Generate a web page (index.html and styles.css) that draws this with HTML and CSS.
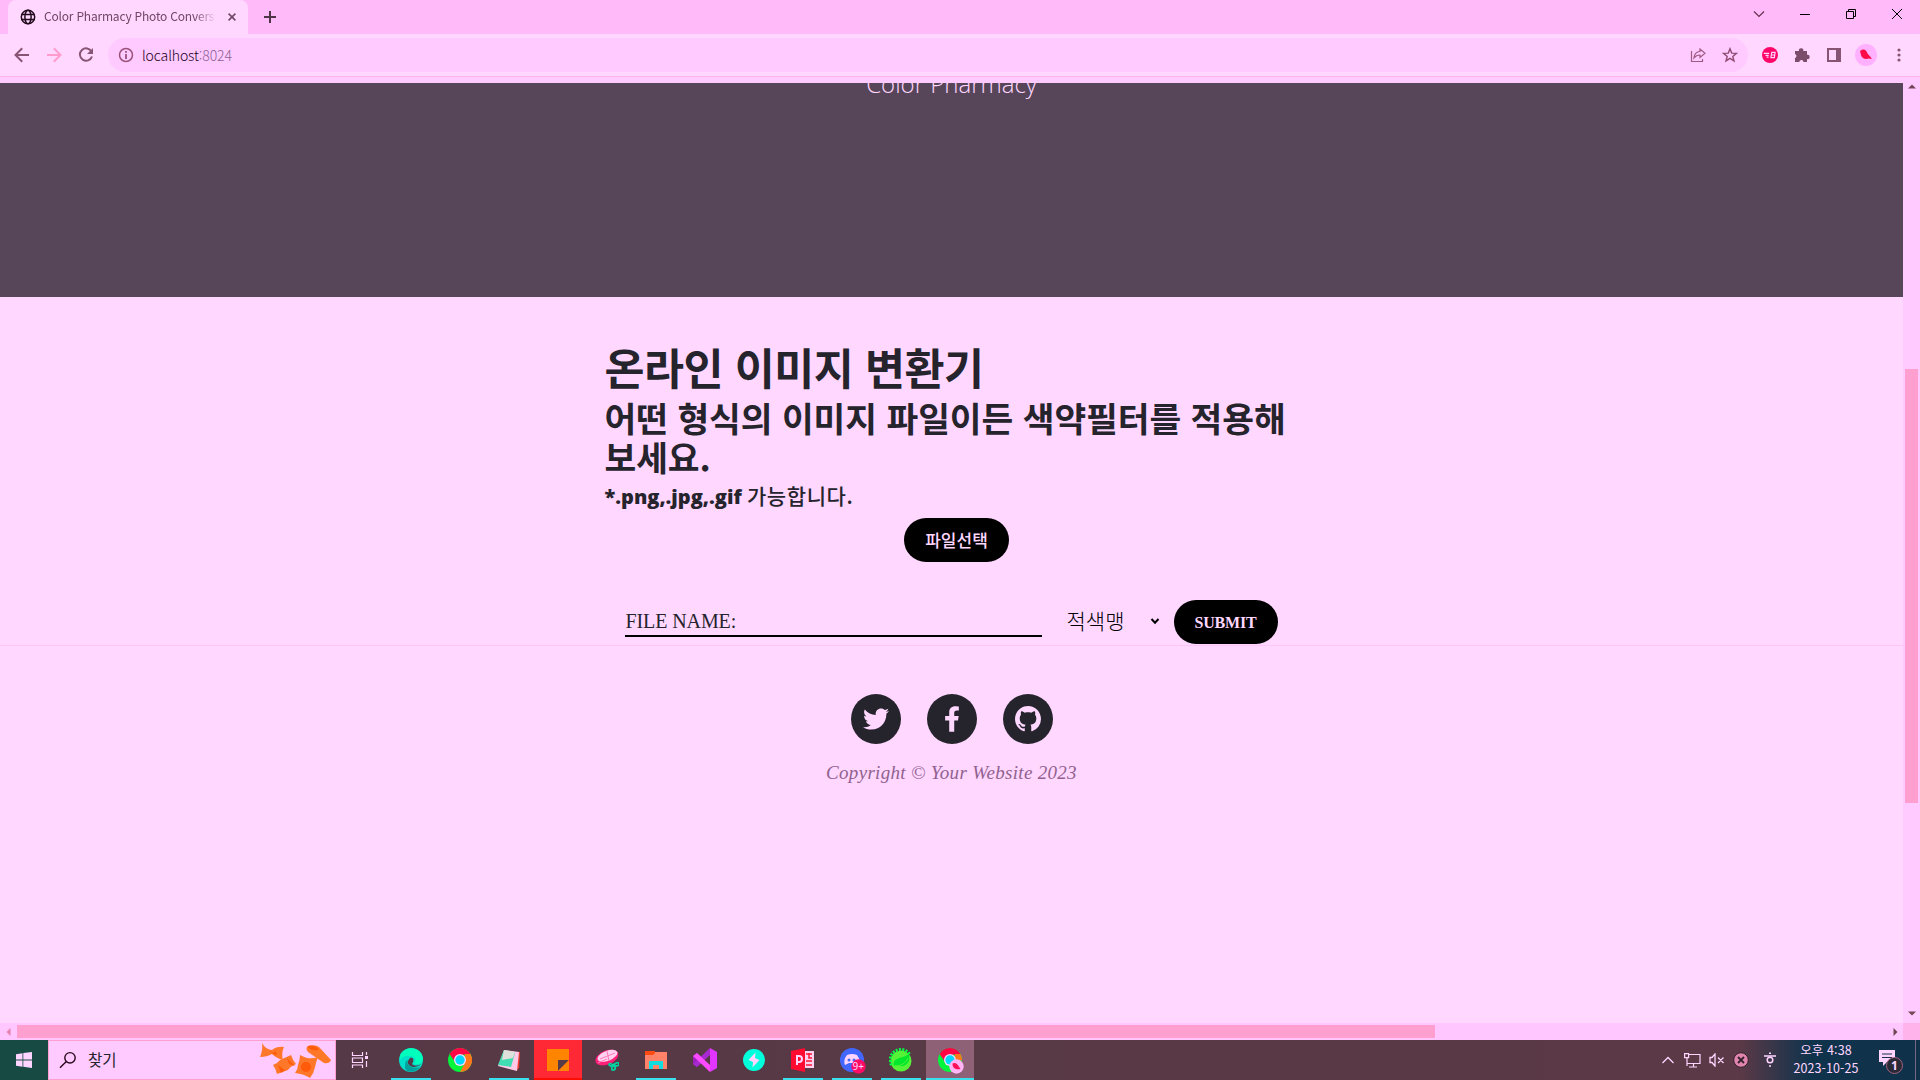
FILE: index.html
```html
<!DOCTYPE html>
<html lang="ko">
<head>
<meta charset="utf-8">
<title>Color Pharmacy Photo Conversion</title>
<link rel="stylesheet" href="styles.css">
</head>
<body>
<header class="tabstrip">
  <div class="tab">
    <svg class="globe" width="16" height="16" viewBox="0 0 16 16" fill="none" stroke="#210a1c" stroke-width="1.5"><circle cx="8" cy="8" r="6.7"/><ellipse cx="8" cy="8" rx="3.1" ry="6.7"/><path d="M1.6 5.5h12.8M1.6 10.5h12.8"/></svg>
    <span class="tab-title">Color Pharmacy Photo Convers</span>
    <svg width="8" height="8" viewBox="0 0 8 8" stroke="#704764" stroke-width="1.6"><path d="M.6.6l6.8 6.8M7.4.6L.6 7.4"/></svg>
  </div>
  <svg class="plus" width="12" height="12" viewBox="0 0 12 12" stroke="#4f3346" stroke-width="2"><path d="M6 0v12M0 6h12"/></svg>
  <div class="window-controls">
    <svg width="12" height="12" viewBox="0 0 12 12" fill="none" stroke="#66304f" stroke-width="1.2"><path d="M1 3.5l5 5 5-5"/></svg>
    <svg width="12" height="12" viewBox="0 0 12 12" stroke="#000"><path d="M1 6.5h10"/></svg>
    <svg width="12" height="12" viewBox="0 0 12 12" fill="none" stroke="#000"><path d="M1.500 3.500h7v7h-7zM3.500 3V1.500h7v7H9"/></svg>
    <svg width="12" height="12" viewBox="0 0 12 12" stroke="#000"><path d="M1 1l10 10M11 1L1 11"/></svg>
  </div>
</header>
<nav class="toolbar">
  <svg width="16" height="16" viewBox="0 0 16 16" fill="none" stroke="#885474" stroke-width="2"><path d="M15 8H2M8.2 1.3L1.5 8l6.700 6.700"/></svg>
  <svg width="16" height="16" viewBox="0 0 16 16" fill="none" stroke="#ff9ccc" stroke-width="2"><path d="M1 8h13M7.800 1.300L14.500 8l-6.700 6.700"/></svg>
  <svg width="16" height="16" viewBox="0 0 16 16" fill="none" stroke="#885474" stroke-width="2"><path d="M13.600 4.600A6.200 6.200 0 1 0 14 9.500"/><path d="M15 1v6H9z" fill="#885474" stroke="none"/></svg>
  <div class="omnibox">
    <svg width="16" height="16" viewBox="0 0 16 16" fill="none" stroke="#9b527a" stroke-width="1.500"><circle cx="8" cy="8" r="6.500"/><path d="M8 7v5M8 4v1.700" stroke-width="1.800"/></svg>
    <span class="url">localhost<span class="port">:8024</span></span>
    <svg class="share" width="16" height="16" viewBox="0 0 16 16" fill="none" stroke="#a05a82" stroke-width="1.200"><path d="M1.500 4v10.500h11V12M4 11c.3-4 2.500-6.300 6-6.500V2l5 4.300-5 4.200V8C7 8 5.500 9 4 11z"/></svg>
    <svg width="16" height="16" viewBox="0 0 16 16" fill="none" stroke="#8d4b70" stroke-width="1.400"><path d="M8 1.800l1.700 4.300 4.700.3-3.600 3 1.200 4.500L8 11.400l-4 2.500 1.200-4.500-3.600-3 4.700-.3z"/></svg>
  </div>
  <svg class="ext" width="16" height="16" viewBox="0 0 16 16"><circle cx="8" cy="8" r="8" fill="#ff0568"/><path d="M1.800 6.300h5.400M3.500 8.300h3.200M4.600 10.200h2M9.800 5.300h3.300l-.4 2.600-.4 2.800H8.900zM9.400 8h3.200" fill="none" stroke="#ffd5ff" stroke-width="1.200"/></svg>
  <svg width="16" height="16" viewBox="0 0 16 16" fill="#7c4c6b"><path d="M1 4h4a2.200 2.200 0 1 1 4.300 0H13v3.800a2.200 2.200 0 1 1 0 4.300V15H9.500a2.100 2.100 0 0 0-4.200 0H1v-4a2.100 2.100 0 0 0 0-4z"/></svg>
  <svg width="16" height="16" viewBox="0 0 16 16"><path d="M2 2h12v12H2z" fill="none" stroke="#885474" stroke-width="2"/><path d="M10 1h5v14h-5z" fill="#885474"/></svg>
  <svg class="avatar" width="22" height="22" viewBox="0 0 22 22"><circle cx="11" cy="11" r="11" fill="#ffb0ff"/><path d="M5 7l2.500-1.500C10 5 12 7 12.500 9.500l3.500 4 .8 1.500-3-.5c-3 1-7 .3-7.800-3.500z" fill="#ff0a46"/></svg>
  <svg class="menu" width="4" height="14" viewBox="0 0 4 14" fill="#885474"><circle cx="2" cy="2" r="1.600"/><circle cx="2" cy="7" r="1.600"/><circle cx="2" cy="12" r="1.600"/></svg>
</nav>
<div class="divider"></div>
<div class="viewport">
  <main class="page">
    <section class="hero"><p class="hero-title">Color Pharmacy</p></section>
    <section class="converter">
      <h1>온라인 이미지 변환기</h1>
      <h2>어떤 형식의 이미지 파일이든 색약필터를 적용해보세요.</h2>
      <p class="formats">*.png,.jpg,.gif <span class="formats-note">가능합니다.</span></p>
      <div class="choose"><button class="pill">파일선택</button></div>
      <div class="form-row">
        <div class="filename">FILE NAME:</div>
        <div class="select">적색맹<svg width="10" height="7" viewBox="0 0 10 7" fill="none" stroke="#000" stroke-width="2"><path d="M1.500 1L5 4.700 8.500 1"/></svg></div>
        <button class="pill submit">SUBMIT</button>
      </div>
    </section>
    <footer class="footer">
      <div class="social">
        <a class="circle"><svg width="26" height="26" viewBox="0 0 512 512"><path d="M459.370 151.716c.325 4.548.325 9.097.325 13.645 0 138.720-105.583 298.558-298.558 298.558-59.452 0-114.680-17.219-161.137-47.106 8.447.974 16.568 1.299 25.340 1.299 49.055 0 94.213-16.568 130.274-44.832-46.132-.975-84.792-31.188-98.112-72.772 6.498.974 12.995 1.624 19.818 1.624 9.421 0 18.843-1.300 27.614-3.573-48.081-9.747-84.143-51.980-84.143-102.985v-1.299c13.969 7.797 30.214 12.670 47.431 13.319-28.264-18.843-46.781-51.005-46.781-87.391 0-19.492 5.197-37.360 14.294-52.954 51.655 63.675 129.300 105.258 216.365 109.807-1.624-7.797-2.599-15.918-2.599-24.040 0-57.828 46.782-104.934 104.934-104.934 30.213 0 57.502 12.670 76.670 33.137 23.715-4.548 46.456-13.320 66.599-25.340-7.798 24.366-24.366 44.833-46.132 57.827 21.117-2.273 41.584-8.122 60.426-16.243-14.292 20.791-32.161 39.308-52.628 54.253z"/></svg></a>
        <a class="circle"><svg width="16" height="26" viewBox="0 0 320 512"><path d="M279.140 288l14.220-92.660h-88.910v-60.130c0-25.350 12.420-50.060 52.240-50.060h40.420V6.260S260.430 0 225.360 0c-73.220 0-121.080 44.380-121.080 124.720v70.620H22.890V288h81.390v224h100.170V288z"/></svg></a>
        <a class="circle"><svg width="26" height="26" viewBox="0 0 16 16"><path d="M8 0C3.580 0 0 3.580 0 8c0 3.540 2.290 6.530 5.470 7.590.4.070.55-.17.55-.38 0-.19-.01-.82-.01-1.490-2.010.37-2.530-.49-2.690-.94-.09-.23-.48-.94-.82-1.130-.28-.15-.68-.52-.01-.53.63-.01 1.080.58 1.230.82.720 1.210 1.870.87 2.330.66.070-.52.280-.87.510-1.070-1.780-.2-3.640-.89-3.640-3.950 0-.87.310-1.590.82-2.150-.08-.2-.36-1.020.08-2.120 0 0 .67-.21 2.200.82.640-.18 1.320-.27 2-.27s1.360.09 2 .27c1.530-1.040 2.200-.82 2.200-.82.440 1.100.160 1.920.08 2.120.51.560.82 1.270.82 2.150 0 3.070-1.870 3.750-3.650 3.950.29.25.54.73.54 1.480 0 1.070-.01 1.930-.01 2.200 0 .21.150.46.550.38A8.010 8.010 0 0 0 16 8c0-4.420-3.580-8-8-8z"/></svg></a>
      </div>
      <p class="copyright">Copyright © Your Website 2023</p>
    </footer>
  </main>
  <div class="vscroll">
    <svg width="8" height="5" viewBox="0 0 8 5" fill="#714654"><path d="M0 4.500L4 .500l4 4z"/></svg>
    <div class="vthumb"></div>
    <svg class="down" width="8" height="5" viewBox="0 0 8 5" fill="#714654"><path d="M0 .500h8l-4 4z"/></svg>
  </div>
</div>
<div class="hscroll">
  <svg width="5" height="8" viewBox="0 0 5 8" fill="#e781b0"><path d="M4.500 0v8l-4-4z"/></svg>
  <div class="hthumb"></div>
  <svg class="right" width="5" height="8" viewBox="0 0 5 8" fill="#714654"><path d="M.500 0v8l4-4z"/></svg>
  <div class="corner"></div>
</div>
<footer class="taskbar">
  <div class="start"><svg width="16" height="16" viewBox="0 0 16 16" fill="#ffd5ff"><path d="M0 2.200L6.500 1.300v6.200H0zM7.300 1.100L16 0v7.500H7.300zM0 8.400h6.500v6.300L0 13.800zM7.300 8.400H16V16l-8.700-1.200z"/></svg></div>
  <div class="search">
    <svg width="18" height="18" viewBox="0 0 18 18" fill="none" stroke="#250819" stroke-width="1.400"><circle cx="11" cy="6.800" r="5.200"/><path d="M7.300 10.500L1 16.800"/></svg>
    <span>찾기</span>
    <svg class="pasta" width="72" height="38" viewBox="0 0 72 38"><g fill="#ff782a"><path d="M2 2q4 7 10 7 5-4 12-3-3 6-1 13-7-2-11-6-5 3-12 3 3-7 2-14z"/><path d="M13 24q4-1 7-5l11-5q2 6 5 9-5 2-8 6l-11 4q-1-5-4-9z"/><path d="M40 14q4 2 7 3 5 1 11-1-2 5-3 10-1 6-5 11-6-4-15-5 3-4 3-8 2-5 2-10z"/><path d="M48 5q7-2 11 1l12 13q-2 4-7 3L48 11q-3-4 0-6z"/></g><g fill="#ff5b0b"><path d="M9 9l4 3 3-2 1 4-4-1zM27 17l8 8-6-2zM18 24l7 5-4 3z"/><ellipse cx="53" cy="7" rx="5.500" ry="2" transform="rotate(15 53 7)"/><circle cx="46" cy="26" r="5"/></g></svg>
  </div>
  <div class="apps">
    <div class="app taskview"><svg width="24" height="24" viewBox="0 0 24 24" fill="none" stroke="#ffd5ff" stroke-width="1.200"><path d="M4.500 4v3.500h10V4M4.500 20v-3h10v3M4.500 10h10v4.500h-10zM18.500 4v3M18.500 13v6"/><path d="M17 8h3v3h-3z" fill="#ffd5ff" stroke="none"/></svg></div>
    <div class="app open"><svg width="24" height="24" viewBox="0 0 24 24"><circle cx="12" cy="12" r="12" fill="#00dfc9"/><path d="M1 8C5-3 22-2 24 10c0 5-4 7-9 6 3-4 1-8-4-8-4 0-8 0-10 4z" fill="#00ffbd"/><path d="M9 12c-2 5 3 9 12 7-5 7-16 6-15-1 0-4 1-6 3-6z" fill="#00a09c"/><path d="M11 10c3-1 4 1 3 4l-1 2c2 2 6 2 9 0-1 2-5 3-8 3-5-1-7-5-3-9z" fill="#553946"/></svg></div>
    <div class="app"><svg width="24" height="24" viewBox="0 0 24 24"><circle cx="12" cy="12" r="12" fill="#00f53c"/><path d="M1.600 6A12 12 0 0 1 22.400 6L12 7 7 14z" fill="#ff0546"/><path d="M22.400 6A12 12 0 0 1 12 24l5-9V6z" fill="#ff761b"/><circle cx="12" cy="12" r="6" fill="#ffd5ff"/><circle cx="12" cy="12" r="4.700" fill="#00d9ff"/></svg></div>
    <div class="app open notepad"><svg width="24" height="24" viewBox="0 0 24 24"><path d="M20 4h3l-1 16-3 3z" fill="#f43b31"/><path d="M7 2l15 2-2 19L1 18z" fill="#ffc9e7"/><path d="M7 2l11 3-4 14-13-2z" fill="#40dcb2"/><path d="M7 2l11 2-2 6-11 2z" fill="#dfdfdc"/></svg></div>
    <div class="app alert"><svg width="22" height="22" viewBox="0 0 22 22"><path d="M0 0h22v11H11v11H0z" fill="#ff8500"/><path d="M11 11h11L11 22z" fill="#573b48"/><path d="M22 11v11H11z" fill="#ff8500"/></svg></div>
    <div class="app"><svg width="24" height="24" viewBox="0 0 24 24"><ellipse cx="12" cy="9.500" rx="12" ry="7" fill="#ff1e78" transform="rotate(-22 12 10)"/><ellipse cx="12.500" cy="8" rx="10.500" ry="5" fill="#ffd0ef" transform="rotate(-22 12 8)"/><path d="M5 11L20 5M12 3l2 10M3 15l9-4" stroke="#ff79b7"/><path d="M18 17q-4-3-4 0 2 2 4 0 5-4 6-1 0 3-6 1 4 3 1 5-4 1-1-5" fill="none" stroke="#00d6a5" stroke-width="1.700"/></svg></div>
    <div class="app open"><svg width="24" height="24" viewBox="0 0 24 24"><path d="M1 3h10v1h12v17H1z" fill="#ff8269"/><path d="M1 3h10v2L9 7H1z" fill="#ff4b12"/><path d="M5 13h14v8h-4v-4H9v4H5z" fill="#10dce0"/></svg></div>
    <div class="app"><svg width="24" height="24" viewBox="0 0 24 24"><path d="M0 8l4-3 5 7-5 7-4-3z" fill="#9d20bd"/><path d="M17 0l7 4v16l-7 4z" fill="#e235ff"/><path d="M17 0v7L4 19l-4-3z" fill="#a829d1"/><path d="M0 8l4-3 13 12v7z" fill="#ff4bff"/></svg></div>
    <div class="app"><svg width="24" height="24" viewBox="0 0 24 24"><circle cx="12" cy="12" r="11" fill="#00ffdb"/><path d="M13.500 4.500L6.500 12l4.500 2-.5 5.500 7-7.500-4.500-2z" fill="#ffd5ff"/></svg></div>
    <div class="app open"><svg width="24" height="24" viewBox="0 0 24 24"><path d="M13 3h10v17H13z" fill="#ffd0ef"/><path d="M15 6h6M15 13h6M15 17h6M18 5v5h3" stroke="#ff1636" stroke-width="1.500" fill="none"/><path d="M0 3l14-3v24L0 21z" fill="#ff0b32"/><path d="M6 17V8h2q3 0 3 3t-3 3H6" stroke="#ffd5ff" stroke-width="2" fill="none"/></svg></div>
    <div class="app open"><svg class="badged" width="26" height="26" viewBox="0 0 26 26"><circle cx="12" cy="12" r="12" fill="#4267ff"/><path d="M7 7q5-2 10 0 4 6 2 10l-4-2H9l-4 2Q3 12 7 7z" fill="#ffd5ff"/><circle cx="9" cy="12" r="1.500" fill="#4267ff"/><circle cx="14" cy="12" r="1.500" fill="#4267ff"/><circle cx="18.500" cy="18.500" r="7.200" fill="#ff0b66"/><text x="12.500" y="22" class="badge-text">9+</text></svg></div>
    <div class="app open"><svg width="24" height="24" viewBox="0 0 24 24"><circle cx="12" cy="13" r="10.500" fill="#57f238"/><path d="M2.500 17A10.500 10.500 0 0 1 21 7" fill="none" stroke="#00ff42" stroke-width="3" stroke-dasharray="2 1.300"/><path d="M5 18C3 9 13 11 20 6c2 8-3 13-10 12-3 0-4-1-5 0z" fill="#00e72b"/><path d="M6 18c6 0 11-3 13-8" fill="none" stroke="#57f238"/></svg></div>
    <div class="app active"><svg class="badged" width="26" height="26" viewBox="0 0 26 26"><circle cx="12" cy="12" r="12" fill="#00f53c"/><path d="M1.600 6A12 12 0 0 1 22.400 6L12 7 7 14z" fill="#ff0546"/><path d="M22.400 6A12 12 0 0 1 24 12l-7 3V6z" fill="#ff761b"/><circle cx="12" cy="12" r="6" fill="#ffd5ff"/><circle cx="12" cy="12" r="4.700" fill="#00d9ff"/><circle cx="18.500" cy="18.500" r="7.200" fill="#ffb5f5"/><path d="M14.500 15.500c3-1.500 5 .5 6 2.500l2 3c-4 .8-8 0-8-5.500z" fill="#ff1159"/></svg></div>
  </div>
  <div class="tray">
    <svg width="12" height="8" viewBox="0 0 12 8" fill="none" stroke="#ffd5ff" stroke-width="1.300"><path d="M.500 7L6 1.500 11.500 7"/></svg>
    <svg class="network" width="17" height="15" viewBox="0 0 17 15" fill="none" stroke="#ffd5ff" stroke-width="1.200"><path d="M5 1.500h11v9H3V6M9.500 11v3M5 14h8M.600.600h4v4h-4zM3 5v8"/></svg>
    <svg width="16" height="14" viewBox="0 0 16 14" fill="none" stroke="#ffd5ff" stroke-width="1.300"><path d="M1 4.500h2L6 1v12L3 9.500H1zM9 4.500l5.500 5.500M14.500 4.500L9 10"/></svg>
    <svg width="16" height="16" viewBox="0 0 16 16"><circle cx="8" cy="8" r="7.300" fill="#e083ad" stroke="#33212b"/><path d="M5 5l6 6M11 5l-6 6" stroke="#33212b" stroke-width="1.800"/></svg>
    <svg class="ime" width="14" height="16" viewBox="0 0 14 16" fill="none" stroke="#ffd5ff" stroke-width="1.500"><path d="M6 1.200h2M1 4h12"/><circle cx="7" cy="8" r="2.800"/><path d="M7 13v2"/></svg>
    <div class="clock"><span>오후 4:38</span><span>2023-10-25</span></div>
    <svg class="notice" width="26" height="26" viewBox="0 0 26 26"><path d="M1 1h16v12H9l-4 4v-4H1z" fill="#ffd5ff"/><path d="M4 5h10M4 8.500h10" stroke="#172f48"/><circle cx="16.500" cy="16.500" r="8" fill="#2b2935" stroke="#a26385"/><text x="13" y="21" class="notice-text">1</text></svg>
  </div>
  <div class="show-desktop"></div>
</footer>
</body>
</html>
```
FILE: styles.css
```css
* { box-sizing: border-box; }
body { margin: 0; width: 1920px; height: 1080px; overflow: hidden; display: flex; flex-direction: column; background: #ffd7ff; font-family: "Noto Sans", "Noto Sans CJK KR", sans-serif; color: #25242c; }
svg { display: block; flex: none; }
p, h1, h2 { margin: 0; }

.tabstrip { height: 34px; background: #ffbbf9; display: flex; align-items: center; padding-left: 8px; flex: none; }
.tab { width: 240px; height: 34px; background: #ffd7ff; border-radius: 8px 8px 0 0; display: flex; align-items: center; padding: 0 12px; }
.tab-title { width: 171px; margin: -3px 13px 0 8px; font-size: 12px; white-space: nowrap; overflow: hidden; color: #704764; font-family: "Noto Sans CJK KR", sans-serif; -webkit-mask-image: linear-gradient(to right, #000 150px, transparent 173px); mask-image: linear-gradient(to right, #000 150px, transparent 173px); letter-spacing: -0.2px; }
.plus { margin-left: 16px; }
.window-controls { margin-left: auto; display: flex; gap: 34px; padding: 0 17px 6px 0; }

.toolbar { height: 42px; flex: none; display: flex; align-items: center; padding: 0 19px 0 14px; gap: 16px; }
.omnibox { flex: 1; height: 34px; margin: 0 -2px 0 -2px; background: #ffcaff; border-radius: 17px; display: flex; align-items: center; padding: 0 10px 0 10px; }
.url { margin-left: 8px; font-size: 14px; font-weight: 300; letter-spacing: -0.1px; color: #1a0018; font-family: "Noto Sans CJK KR", sans-serif; }
.port { color: #8a6195; }
.share { margin: 0 16px 0 auto; }
.avatar { margin: 0 -3px; }
.menu { margin-left: 7px; }
.divider { height: 7px; flex: none; background: #ffcaff; border-top: 1px solid #ffb3ea; }

.viewport { height: 940px; flex: none; display: flex; overflow: hidden; }
.page { width: 1903px; }
.hero { height: 214px; background: #574659; overflow: hidden; text-align: center; }
.hero-title { margin-top: -16px; font: 300 24px/33px "Open Sans", sans-serif; color: #ffd7ff; }
.converter { height: 348px; width: 694px; margin: 0 auto; padding-top: 44px; }
h1 { font: bold 43.5px/52px "Noto Sans CJK KR", sans-serif; letter-spacing: -0.5px; }
h2 { margin-top: 5px; font: bold 34.5px/39px "Noto Sans CJK KR", sans-serif; letter-spacing: -0.08px; word-break: break-all; }
.formats { margin-top: 7px; font: 800 20px/24px "Open Sans", sans-serif; white-space: nowrap; }
.formats-note { font: 500 21px/24px "Noto Sans CJK KR", sans-serif; letter-spacing: 0.6px; }
.choose { display: flex; justify-content: center; margin: 9px 0 38px 10px; }
.pill { width: 105px; height: 44px; border: 0; border-radius: 22px; background: #000; color: #ffd7ff; font: 500 17px "Noto Sans CJK KR", sans-serif; padding: 0 0 2px; }
.submit { width: 104px; font: bold 16px "Liberation Serif", serif; letter-spacing: -0.2px; padding: 1px 0 0; }
.form-row { display: flex; padding-left: 20px; height: 44px; }
.filename { width: 417px; height: 37px; border-bottom: 2px solid #000; padding-left: 1px; font: 20px/43px "Liberation Serif", serif; letter-spacing: -0.1px; }
.select { width: 132px; padding: 0 14px 4px 25px; display: flex; align-items: center; justify-content: space-between; font: 300 21px/40px "Noto Sans CJK KR", sans-serif; color: #000; }
.select svg { margin-top: 2px; }
.footer { border-top: 1px solid #ffc4f8; padding-top: 48px; }
.social { display: flex; justify-content: center; gap: 26px; }
.circle { width: 50px; height: 50px; border-radius: 50%; background: #25242c; fill: #ffd7ff; display: flex; align-items: center; justify-content: center; }
.copyright { margin-top: 17px; text-align: center; font: italic 19px/24px "Liberation Serif", serif; letter-spacing: 0.3px; color: #91628f; }

.vscroll { width: 17px; background: #ffcaff; display: flex; flex-direction: column; align-items: center; padding-top: 1px; }
.vthumb { margin-top: 280px; width: 13px; height: 434px; background: #ff9fcf; }
.down { margin-top: auto; margin-bottom: 7px; }
.hscroll { height: 17px; flex: none; background: #ffc6ff; display: flex; align-items: center; padding-left: 6px; }
.hthumb { width: 1418px; height: 13px; margin-left: 6px; background: #ff9fcf; }
.right { margin: 0 5px 0 auto; }
.corner { width: 17px; height: 17px; background: #ffb3ea; }

.taskbar { height: 40px; flex: none; display: flex; background: linear-gradient(to right, #553946 0, #5b3946 1740px, #10334c 1810px, #10314a 100%); }
.start { width: 48px; background: #164a43; display: flex; align-items: center; justify-content: center; }
.search { width: 288px; background: #ffcaff; border: 1px solid #ff9fcf; display: flex; align-items: center; padding-left: 10px; font: 15.5px "Noto Sans CJK KR", sans-serif; }
.search span { margin: -3px 0 0 11px; }
.pasta { margin: 0 3px 0 auto; }
.apps { display: flex; gap: 1px; }
.app { width: 48px; height: 40px; display: flex; align-items: center; justify-content: center; }
.taskview { margin-right: 2px; }
.open { background: linear-gradient(#39e1ef, #39e1ef) 50% 100% / 40px 2px no-repeat; }
.alert { background: #ff2936; border-bottom: 2px solid #ff0d00; padding-top: 2px; }
.active { background: #8e6177; border-bottom: 2px solid #39e1ef; padding-top: 2px; }
.badged { margin: 1px 0 0 2px; }
.badge-text { font: 10px "Noto Sans", sans-serif; fill: #ffd7ff; }
.tray { margin-left: auto; padding-right: 11px; display: flex; align-items: center; gap: 8px; }
.network { margin-left: 2px; }
.ime { margin-left: 6px; }
.clock { width: 70px; margin-left: 6px; display: flex; flex-direction: column; align-items: center; color: #ffd7ff; font: 12.5px/18px "Noto Sans CJK KR", sans-serif; white-space: nowrap; padding-bottom: 2px; letter-spacing: 0.1px; }
.notice { margin: 4px 0 0 9px; }
.notice-text { font: bold 12px "Noto Sans", sans-serif; fill: #ffd7ff; }
.show-desktop { width: 5px; border-left: 1px solid #7a6785; }
```
